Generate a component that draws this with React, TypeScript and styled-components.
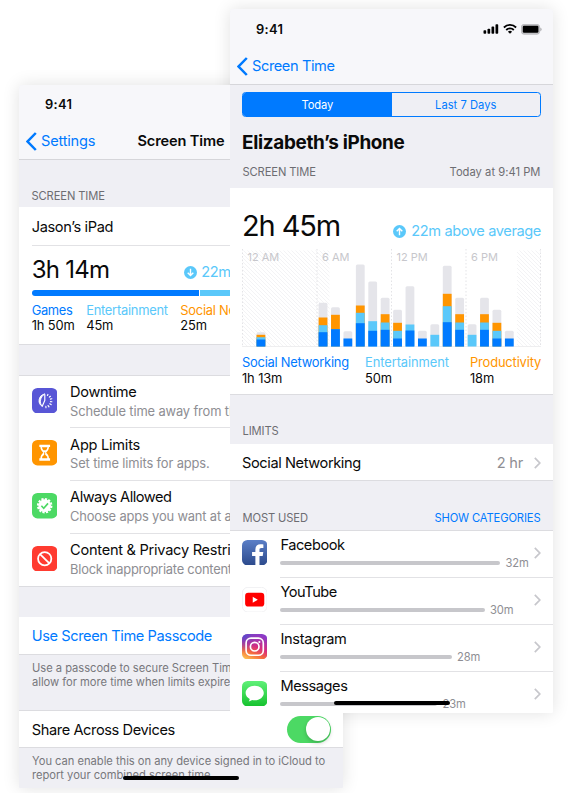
import React from "react";
import styled, { createGlobalStyle, css } from "styled-components";

const blue = "#007aff";
const sky = "#5ac8fa";
const orange = "#ff9500";
const gray = "#8e8e93";
const hairline = "#dcdce0";

const GlobalStyle = createGlobalStyle`
  * { box-sizing: border-box; }
  body { margin: 0; background: #fff; font-family: Inter, "Liberation Sans", sans-serif; color: #0a0a0a; -webkit-font-smoothing: antialiased; }
  svg { display: block; flex: none; }
`;

const Stage = styled.main`
  display: grid;
  width: 571px;
  height: 793px;
  overflow: hidden;
  align-items: start;
  justify-items: start;
`;

const Phone = styled.section<{ $front?: boolean }>`
  grid-area: 1 / 1;
  position: relative;
  display: flex;
  flex-direction: column;
  width: ${(p) => (p.$front ? 323 : 324)}px;
  height: ${(p) => (p.$front ? 704 : 703)}px;
  margin: ${(p) => (p.$front ? "9px 0 0 230px" : "85px 0 0 19px")};
  background: #efeff4;
  border-radius: 4px 4px 1px 1px;
  overflow: hidden;
  white-space: nowrap;
`;

/* Carries the soft shadow, which the clipped phone body cannot show. */
const PhoneShadow = styled.div<{ $front?: boolean }>`
  grid-area: 1 / 1;
  width: ${(p) => (p.$front ? 323 : 324)}px;
  height: ${(p) => (p.$front ? 704 : 703)}px;
  margin: ${(p) => (p.$front ? "9px 0 0 230px" : "85px 0 0 19px")};
  border-radius: 4px;
  box-shadow: 0 0 17px rgba(0, 0, 0, 0.12);
`;

const Header = styled.header<{ $height: number }>`
  height: ${(p) => p.$height}px;
  flex: none;
  background: #f7f7fa;
  border-bottom: 1px solid #d6d6da;
`;

const StatusBar = styled.div<{ $height: number }>`
  display: flex;
  align-items: center;
  justify-content: space-between;
  height: ${(p) => p.$height}px;
  padding: 0 11px 0 26px;
`;

const Clock = styled.span`
  font-size: 12.9px;
  font-weight: 600;
  letter-spacing: 0.35px;
`;

const StatusIcons = styled.div`
  display: flex;
  align-items: center;
  gap: 4px;
`;

const NavBar = styled.div`
  display: grid;
  grid-template-columns: 1fr auto 1fr;
  align-items: center;
  height: 34px;
  padding: 0 7px;
`;

const BackLink = styled.a<{ $track: number }>`
  display: flex;
  align-items: center;
  gap: 4px;
  color: ${blue};
  font-size: 14.6px;
  letter-spacing: ${(p) => p.$track}px;
`;

const NavTitle = styled.h1`
  margin: 0;
  font-size: 14.6px;
  font-weight: 600;
  letter-spacing: -0.13px;
`;

const Segmented = styled.div`
  display: flex;
  flex: none;
  height: 25px;
  margin: 7px 12px 0 12px;
  border: 1px solid ${blue};
  border-radius: 3.5px;
  overflow: hidden;
`;

const Segment = styled.button<{ $active?: boolean }>`
  flex: 1;
  padding: 0;
  border: 0;
  font: 400 11.2px Inter, sans-serif;
  letter-spacing: ${(p) => (p.$active ? -0.15 : 0.02)}px;
  color: ${(p) => (p.$active ? "#fff" : blue)};
  background: ${(p) => (p.$active ? blue : "transparent")};
`;

const DeviceTitle = styled.h2`
  flex: none;
  margin: 0;
  padding: 0 12px;
  height: 50px;
  font-size: 18.9px;
  line-height: 51px;
  font-weight: 700;
  letter-spacing: -0.32px;
`;

const SectionLabels = styled.div<{ $height: number; $below: number }>`
  display: flex;
  flex: none;
  align-items: flex-end;
  justify-content: space-between;
  height: ${(p) => p.$height}px;
  padding: 0 12.5px ${(p) => p.$below}px 12.5px;
  font-size: 11.2px;
  line-height: 14px;
  color: #6d6d72;
`;

const Label = styled.span<{ $track?: number }>`
  letter-spacing: ${(p) => p.$track ?? -0.12}px;
`;

const LinkLabel = styled(Label)`
  color: ${blue};
`;

const Card = styled.div<{ $height: number; $inset?: number }>`
  flex: none;
  height: ${(p) => p.$height}px;
  padding: 0 ${(p) => p.$inset ?? 12}px;
  background: #fff;
  border-bottom: 1px solid ${hairline};
`;

const UsageSummary = styled.div<{ $large?: boolean }>`
  display: flex;
  align-items: flex-start;
  justify-content: space-between;
  ${(p) =>
    p.$large
      ? css`height: 61px; padding-top: 22.5px;`
      : css`height: 44px; padding-top: 9px;`}
`;

const TotalTime = styled.strong<{ $large?: boolean }>`
  font-weight: 400;
  font-size: ${(p) => (p.$large ? 29 : 24)}px;
  line-height: 30px;
  letter-spacing: ${(p) => (p.$large ? -1.1 : -0.72)}px;
`;

const Trend = styled.span<{ $large?: boolean }>`
  display: flex;
  align-items: center;
  gap: ${(p) => (p.$large ? 5 : 4)}px;
  margin-top: ${(p) => (p.$large ? 12.5 : 9.5)}px;
  font-size: 14.6px;
  line-height: 16px;
  letter-spacing: -0.39px;
  color: ${sky};
`;

const Legend = styled.dl<{ $columns: string; $top: number }>`
  display: grid;
  grid-template-columns: ${(p) => p.$columns};
  margin: 0;
  padding-top: ${(p) => p.$top}px;
  font-size: 12.9px;
  line-height: 15.6px;
`;

const LegendName = styled.dt<{ $color: string; $track: number }>`
  color: ${(p) => p.$color};
  letter-spacing: ${(p) => p.$track}px;
`;

const LegendValue = styled.dd`
  margin: 0;
  letter-spacing: -0.12px;
`;

const DeviceRow = styled.div`
  height: 38.5px;
  margin-right: -13px;
  border-bottom: 1px solid #e2e2e5;
  font-size: 14.6px;
  line-height: 40.5px;
  letter-spacing: -0.36px;
`;

const UsageTrack = styled.div`
  display: flex;
  gap: 1.5px;
  height: 6px;
  border-radius: 3px;
  overflow: hidden;
`;

const UsagePart = styled.i<{ $width: number; $color: string }>`
  width: ${(p) => p.$width}px;
  background: ${(p) => p.$color};
`;

const SettingsRow = styled.div<{ $height: number; $link?: boolean; $top?: boolean; $inset?: number }>`
  display: flex;
  flex: none;
  align-items: center;
  height: ${(p) => p.$height}px;
  padding: 1px 12px 0 ${(p) => p.$inset ?? 12}px;
  background: #fff;
  border-bottom: 1px solid ${hairline};
  ${(p) => p.$top && css`border-top: 1px solid ${hairline};`}
  font-size: 14.6px;
  letter-spacing: -0.4px;
  color: ${(p) => (p.$link ? blue : "inherit")};
`;

const RowName = styled.span`
  flex: 1;
`;

const RowValue = styled.span`
  margin-right: 11px;
  color: ${gray};
  letter-spacing: -0.2px;
`;

const Footnote = styled.p<{ $height: number }>`
  flex: none;
  height: ${(p) => p.$height}px;
  margin: 0;
  padding: 7.5px 12.5px 0 13px;
  font-size: 11.2px;
  line-height: 13.7px;
  letter-spacing: -0.03px;
  color: #77777c;
`;

const Gap = styled.div<{ $height: number }>`
  flex: none;
  height: ${(p) => p.$height}px;
`;

const List = styled.ul<{ $inset: number }>`
  flex: none;
  margin: 0;
  padding: 0 0 0 ${(p) => p.$inset}px;
  list-style: none;
  background: #fff;
  border-top: 1px solid ${hairline};
  border-bottom: 1px solid ${hairline};
`;

const OptionItem = styled.li`
  display: flex;
  gap: 13px;
  height: 52.7px;
  padding-top: 12.3px;
`;

const OptionText = styled.div`
  flex: 1;
  height: 52.7px;
  margin-top: -12.3px;
  padding-top: 7.5px;
  ${OptionItem}:not(:last-child) & { border-bottom: 1px solid #e2e2e5; }
`;

const OptionName = styled.div<{ $track: number }>`
  font-size: 14.6px;
  line-height: 18.6px;
  letter-spacing: ${(p) => p.$track}px;
`;

const OptionNote = styled.div<{ $track: number }>`
  font-size: 12.9px;
  line-height: 19.6px;
  color: ${gray};
  letter-spacing: ${(p) => p.$track}px;
`;

const AppItem = styled.li`
  display: flex;
  gap: 13px;
  height: 46.85px;
  padding-top: 9px;
`;

const AppBody = styled.div`
  display: flex;
  flex: 1;
  height: 46.85px;
  margin-top: -9px;
  padding-right: 12px;
  border-bottom: 1px solid #e2e2e5;
`;

const AppUsage = styled.div`
  flex: 1;
  padding-top: 5.2px;
`;

const AppName = styled.div<{ $track: number }>`
  font-size: 14.6px;
  line-height: 18px;
  letter-spacing: ${(p) => p.$track}px;
`;

const AppMeter = styled.div`
  display: flex;
  align-items: center;
  gap: 5px;
  height: 18px;
  margin-right: -12px;
  font-size: 11.2px;
  letter-spacing: -0.05px;
  color: ${gray};
`;

const MeterBar = styled.i<{ $width: number }>`
  width: ${(p) => p.$width}px;
  height: 4.4px;
  border-radius: 3px;
  background: #c7c7cb;
`;

const ChevronSlot = styled.div`
  padding-top: 16px;
`;

const Toggle = styled.span`
  display: flex;
  justify-content: flex-end;
  width: 44px;
  height: 27px;
  margin-top: -1px;
  padding: 1.5px;
  border-radius: 14px;
  background: #4cd964;
`;

const Knob = styled.i`
  width: 24px;
  height: 24px;
  border-radius: 50%;
  background: #fff;
  box-shadow: 0 2px 4px rgba(0, 0, 0, 0.2);
`;

const HomeIndicator = styled.div`
  position: absolute;
  left: 104px;
  bottom: 8px;
  width: 116px;
  height: 4.5px;
  border-radius: 3px;
  background: #000;
`;

const BackChevron = () => (
  <svg width="11" height="19" viewBox="0 0 11 19" fill="none" stroke={blue} strokeWidth="2.5">
    <path d="M9.8 1 1.6 9.5l8.2 8.5" />
  </svg>
);

const Chevron = () => (
  <svg width="7" height="12" viewBox="0 0 7 12" fill="none" stroke="#c7c7cc" strokeWidth="1.7">
    <path d="m.8 .8 5 5.2-5 5.2" />
  </svg>
);

const TrendArrow = ({ down }: { down?: boolean }) => (
  <svg width="13" height="13" viewBox="0 0 13 13">
    <circle cx="6.5" cy="6.5" r="6.5" fill={sky} />
    <path
      d={down ? "M6.5 2.8v6.6M3.7 6.8l2.8 2.8 2.8-2.8" : "M6.5 10.2V3.6M3.7 6.2l2.8-2.8 2.8 2.8"}
      fill="none"
      stroke="#fff"
      strokeWidth="1.4"
    />
  </svg>
);

const Signal = () => (
  <svg width="16" height="10" viewBox="0 0 16 10">
    <rect x="0.5" y="6.2" width="2.7" height="3.6" rx=".8" />
    <rect x="4.5" y="4.7" width="2.7" height="5.1" rx=".8" />
    <rect x="8.5" y="2.6" width="2.7" height="7.2" rx=".8" />
    <rect x="12.5" y="0.2" width="2.7" height="9.6" rx=".8" />
  </svg>
);

const Wifi = () => (
  <svg width="14" height="10" viewBox="0 0 14 10" fill="none" stroke="#000" strokeWidth="1.8">
    <path d="M.9 3.5a8.6 8.6 0 0 1 12.2 0M3.2 6a5.3 5.3 0 0 1 7.6 0" />
    <path d="M7 9.8 4.9 7.7a3 3 0 0 1 4.2 0Z" fill="#000" stroke="none" />
  </svg>
);

const Battery = () => (
  <svg width="21" height="11" viewBox="0 0 21 11">
    <rect x=".4" y=".4" width="18.2" height="9.8" rx="2.6" fill="#c4c4c7" stroke="#b4b4b7" strokeWidth=".8" />
    <rect x="1.8" y="1.8" width="15.6" height="7" rx="1.2" />
    <path d="M19.4 3.6v3.6a2 2 0 0 0 0-3.6Z" fill="#a0a0a3" />
  </svg>
);

const DowntimeIcon = () => (
  <svg width="25.4" height="25.4" viewBox="0 0 26 26">
    <rect width="26" height="26" rx="5.6" fill="#5856d6" />
    <g fill="none" stroke="#fff" strokeLinecap="round">
      <path d="M12.8 6.200A6.900 6.900 0 0 0 10.600 18.900C7.200 15.400 8.200 9.400 12.800 6.200Z" fill="#fff" strokeWidth=".9" />
      <path d="M13.100 6.700v6.100l-2.500 5.600" strokeWidth="1.200" />
      <path d="m15.800 7.600.5-1M17.800 9.300l1.100-.8M18.800 11.400l1.500-.4M18.900 13.900l1.500.2M18.200 16.200l1.400.8M16.500 18l.9 1.300M14.200 18.800l.1 1.400" strokeWidth="1.200" />
    </g>
  </svg>
);

const LimitsIcon = () => (
  <svg width="25.4" height="25.4" viewBox="0 0 26 26">
    <rect width="26" height="26" rx="5.6" fill={orange} />
    <path d="M7.5 4.800h11v2.400h-1.100c0 2.700-1.500 4.400-3 5.800 1.500 1.400 3 3.100 3 5.800h1.100v2.400h-11v-2.400h1.100c0-2.700 1.500-4.400 3-5.800-1.500-1.400-3-3.100-3-5.800H7.500Z" fill="#fff" />
    <path d="M10.200 7.300h5.600c-.2 1.400-.7 2.400-1.500 3.300h-2.600c-.8-.9-1.300-1.900-1.500-3.300ZM12.500 12.500h1v2.700l2.100 2v1.400h-5.200v-1.400l2.100-2Z" fill={orange} />
  </svg>
);

const AllowedIcon = () => (
  <svg width="25.4" height="25.4" viewBox="0 0 26 26">
    <rect width="26" height="26" rx="5.6" fill="#4cd964" />
    <circle cx="13" cy="13" r="6.5" fill="#fff" />
    <circle cx="13" cy="13" r="6.9" fill="none" stroke="#fff" strokeWidth="2.1" strokeDasharray="2.25 1.36" />
    <path d="m9.6 13.1 2.4 2.5 4.4-5" fill="none" stroke="#4cd964" strokeWidth="1.7" />
  </svg>
);

const RestrictionsIcon = () => (
  <svg width="25.4" height="25.4" viewBox="0 0 26 26">
    <rect width="26" height="26" rx="5.6" fill="#ff3b30" />
    <g fill="none" stroke="#fff" strokeWidth="1.8">
      <circle cx="13" cy="13" r="6.8" />
      <path d="m8.2 8.2 9.6 9.6" />
    </g>
  </svg>
);

const FacebookIcon = () => (
  <svg width="25.4" height="25.4" viewBox="0 0 26 26">
    <defs>
      <linearGradient id="fb" x2="0" y2="1">
        <stop stopColor="#5b7fc7" />
        <stop offset="1" stopColor="#2c4a8c" />
      </linearGradient>
    </defs>
    <rect width="26" height="26" rx="5.6" fill="url(#fb)" />
    <path d="M13.700 26V16.300h-3.400v-3.900h3.400V9.700c0-3.500 2.100-5.300 5.200-5.300 1.500 0 2.500.1 3 .2v3.700h-2.100c-1.600 0-1.900.8-1.900 1.900v2.200h3.900l-.6 3.900h-3.300V26Z" fill="#fff" />
  </svg>
);

const YouTubeIcon = () => (
  <svg width="25.4" height="25.4" viewBox="0 0 26 26">
    <rect x=".4" y=".4" width="25.2" height="25.2" rx="5.6" fill="#fff" stroke="#ededf0" strokeWidth=".8" />
    <rect x="3.2" y="6" width="19.6" height="14" rx="3.2" fill="#f00" />
    <path d="m11 10 5.2 3-5.2 3Z" fill="#fff" />
  </svg>
);

const InstagramIcon = () => (
  <svg width="25.4" height="25.4" viewBox="0 0 26 26">
    <defs>
      <linearGradient id="ig" x1=".2" y1="1" x2=".65" y2="0">
        <stop stopColor="#fdbf50" />
        <stop offset=".28" stopColor="#f56a3c" />
        <stop offset=".55" stopColor="#d92d7c" />
        <stop offset="1" stopColor="#8a3ac8" />
      </linearGradient>
      <radialGradient id="igb" cx="0" cy="0" r=".75">
        <stop stopColor="#3f50d8" />
        <stop offset="1" stopColor="#7a3fd0" stopOpacity="0" />
      </radialGradient>
    </defs>
    <rect width="26" height="26" rx="5.6" fill="url(#ig)" />
    <rect width="26" height="26" rx="5.6" fill="url(#igb)" />
    <g fill="none" stroke="#fff" strokeWidth="1.7">
      <rect x="4.2" y="4.2" width="17.6" height="17.6" rx="5" />
      <circle cx="13" cy="13" r="4.4" />
    </g>
    <circle cx="17.8" cy="8.2" r="1.1" fill="#fff" />
  </svg>
);

const MessagesIcon = () => (
  <svg width="25.4" height="25.4" viewBox="0 0 26 26">
    <defs>
      <linearGradient id="msg" x2="0" y2="1">
        <stop stopColor="#5ff078" />
        <stop offset="1" stopColor="#16c22e" />
      </linearGradient>
    </defs>
    <rect width="26" height="26" rx="5.6" fill="url(#msg)" />
    <path d="M13 4.8c5.2 0 9.3 3.3 9.3 7.5s-4.1 7.5-9.3 7.5c-1 0-1.9-.1-2.800-.3-.8.7-2 1.200-3.400 1.300.7-.7 1.100-1.500 1.100-2.400-2.500-1.300-4.200-3.500-4.200-6.100 0-4.200 4.100-7.500 9.300-7.500Z" fill="#fff" />
  </svg>
);

/* Heights above the baseline, in pixels: hour, total, top of orange, top of sky, top of blue. */
const hours: [number, number, number, number, number][] = [
  [1, 14.3, 11.7, 9.3, 7],
  [6, 43.7, 29, 21.3, 14.3],
  [7, 39.3, 31.7, 17.3, 17.3],
  [8, 15.3, 0, 0, 8],
  [9, 82, 41, 33.7, 23.3],
  [10, 65, 0, 25.3, 15.7],
  [11, 48.7, 32.3, 24, 16.7],
  [12, 36.7, 23.7, 15.7, 8],
  [13, 60.3, 0, 22, 16],
  [14, 15.7, 0, 0, 8],
  [15, 22.3, 0, 11.7, 0],
  [16, 80.7, 52.7, 40.3, 24.3],
  [17, 48.7, 32.3, 24, 16.7],
  [18, 22.3, 0, 11.7, 0],
  [19, 48.7, 32.3, 24, 16.7],
  [20, 36.7, 23.7, 15.7, 8],
  [21, 15.7, 0, 0, 8],
];
const tints = ["#e5e5ea", orange, sky, blue];

const ChartLabel = styled.text`
  font: 400 11px Inter, sans-serif;
  fill: #c7c7cc;
`;

const HourChart = () => (
  <svg width="300" height="98" viewBox="0 0 300 98">
    <defs>
      <pattern id="hatch" width="4" height="4" patternUnits="userSpaceOnUse">
        <path d="M-1-1 5 5M-1 3 1 5M3-1 5 1" stroke="#f0f0f2" strokeWidth=".8" />
      </pattern>
    </defs>
    <rect x=".5" y="1.5" width="87" height="96" fill="url(#hatch)" />
    <rect x="275" y="1.5" width="24" height="96" fill="url(#hatch)" />
    {[0.5, 75, 149.5, 224, 298.5].map((x) => (
      <path key={x} d={`M${x} 0V97`} stroke="#dcdcdf" strokeWidth=".8" strokeDasharray="1.5 2" />
    ))}
    <path d="M0 97.5H299" stroke="#e8e8ea" strokeWidth=".7" />
    {["12 AM", "6 AM", "12 PM", "6 PM"].map((t, i) => (
      <ChartLabel key={t} x={5.5 + i * 74.5} y="11.5">
        {t}
      </ChartLabel>
    ))}
    {hours.map(([hour, ...tops]) =>
      tops.map((top, i) =>
        top > 0 ? (
          <rect
            key={`${hour}-${i}`}
            x={2.1 + hour * 12.42}
            y={97.5 - top}
            width="8.8"
            height={top}
            rx={i === 0 ? 1.5 : 0}
            fill={tints[i]}
          />
        ) : null
      )
    )}
  </svg>
);

const options = [
  { icon: <DowntimeIcon />, name: "Downtime", track: -0.36, note: "Schedule time away from the screen.", noteTrack: -0.14 },
  { icon: <LimitsIcon />, name: "App Limits", track: -0.26, note: "Set time limits for apps.", noteTrack: -0.13 },
  { icon: <AllowedIcon />, name: "Always Allowed", track: -0.5, note: "Choose apps you want at all times.", noteTrack: -0.16 },
  { icon: <RestrictionsIcon />, name: "Content & Privacy Restrictions", track: -0.27, note: "Block inappropriate content.", noteTrack: -0.24 },
];

const apps = [
  { icon: <FacebookIcon />, name: "Facebook", track: -0.44, width: 220, time: "32m" },
  { icon: <YouTubeIcon />, name: "YouTube", track: -0.5, width: 204.5, time: "30m" },
  { icon: <InstagramIcon />, name: "Instagram", track: -0.28, width: 171.5, time: "28m" },
  { icon: <MessagesIcon />, name: "Messages", track: -0.42, width: 157, time: "23m" },
];

const SettingsPhone = () => (
  <Phone>
    <Header $height={75}>
      <StatusBar $height={39}>
        <Clock>9:41</Clock>
      </StatusBar>
      <NavBar>
        <BackLink $track={-0.2}>
          <BackChevron />
          Settings
        </BackLink>
        <NavTitle>Screen Time</NavTitle>
      </NavBar>
    </Header>
    <SectionLabels $height={47} $below={4.5}>
      <Label>SCREEN TIME</Label>
    </SectionLabels>
    <Card $height={137.5} $inset={12.7}>
      <DeviceRow>Jason’s iPad</DeviceRow>
      <UsageSummary>
        <TotalTime>3h 14m</TotalTime>
        <Trend>
          <TrendArrow down />
          22m below average
        </Trend>
      </UsageSummary>
      <UsageTrack>
        <UsagePart $width={168} $color={blue} />
        <UsagePart $width={69} $color={sky} />
        <UsagePart $width={60} $color={orange} />
      </UsageTrack>
      <Legend $columns="54.5px 94px auto" $top={7.3}>
        <div>
          <LegendName $color={blue} $track={-0.35}>Games</LegendName>
          <LegendValue>1h 50m</LegendValue>
        </div>
        <div>
          <LegendName $color={sky} $track={-0.26}>Entertainment</LegendName>
          <LegendValue>45m</LegendValue>
        </div>
        <div>
          <LegendName $color={orange} $track={-0.22}>Social Networking</LegendName>
          <LegendValue>25m</LegendValue>
        </div>
      </Legend>
    </Card>
    <Gap $height={30} />
    <List $inset={12.7}>
      {options.map((o) => (
        <OptionItem key={o.name}>
          {o.icon}
          <OptionText>
            <OptionName $track={o.track}>{o.name}</OptionName>
            <OptionNote $track={o.noteTrack}>{o.note}</OptionNote>
          </OptionText>
        </OptionItem>
      ))}
    </List>
    <Gap $height={30} />
    <SettingsRow $height={37.5} $link $inset={12.8}>
      <RowName>Use Screen Time Passcode</RowName>
    </SettingsRow>
    <Footnote $height={55.5}>
      Use a passcode to secure Screen Time settings, and to
      <br />
      allow for more time when limits expire.
    </Footnote>
    <SettingsRow $height={37.5} $top $inset={12.8}>
      <RowName>Share Across Devices</RowName>
      <Toggle>
        <Knob />
      </Toggle>
    </SettingsRow>
    <Footnote $height={42}>
      You can enable this on any device signed in to iCloud to
      <br />
      report your combined screen time.
    </Footnote>
    <HomeIndicator />
  </Phone>
);

const DevicePhone = () => (
  <Phone $front>
    <Header $height={76}>
      <StatusBar $height={40}>
        <Clock>9:41</Clock>
        <StatusIcons>
          <Signal />
          <Wifi />
          <Battery />
        </StatusIcons>
      </StatusBar>
      <NavBar>
        <BackLink $track={-0.4}>
          <BackChevron />
          Screen Time
        </BackLink>
      </NavBar>
    </Header>
    <Segmented>
      <Segment $active>Today</Segment>
      <Segment>Last 7 Days</Segment>
    </Segmented>
    <DeviceTitle>Elizabeth’s iPhone</DeviceTitle>
    <SectionLabels $height={21} $below={9.5}>
      <Label>SCREEN TIME</Label>
      <Label $track={0.02}>Today at 9:41 PM</Label>
    </SectionLabels>
    <Card $height={207}>
      <UsageSummary $large>
        <TotalTime $large>2h 45m</TotalTime>
        <Trend $large>
          <TrendArrow />
          22m above average
        </Trend>
      </UsageSummary>
      <HourChart />
      <Legend $columns="123px 105px auto" $top={8}>
        <div>
          <LegendName $color={blue} $track={-0.24}>Social Networking</LegendName>
          <LegendValue>1h 13m</LegendValue>
        </div>
        <div>
          <LegendName $color={sky} $track={-0.08}>Entertainment</LegendName>
          <LegendValue>50m</LegendValue>
        </div>
        <div>
          <LegendName $color={orange} $track={-0.15}>Productivity</LegendName>
          <LegendValue>18m</LegendValue>
        </div>
      </Legend>
    </Card>
    <SectionLabels $height={49} $below={6}>
      <Label>LIMITS</Label>
    </SectionLabels>
    <SettingsRow $height={37}>
      <RowName>Social Networking</RowName>
      <RowValue>2 hr</RowValue>
      <Chevron />
    </SettingsRow>
    <SectionLabels $height={49} $below={5.5}>
      <Label>MOST USED</Label>
      <LinkLabel>SHOW CATEGORIES</LinkLabel>
    </SectionLabels>
    <List $inset={12}>
      {apps.map((a) => (
        <AppItem key={a.name}>
          {a.icon}
          <AppBody>
            <AppUsage>
              <AppName $track={a.track}>{a.name}</AppName>
              <AppMeter>
                <MeterBar $width={a.width} />
                {a.time}
              </AppMeter>
            </AppUsage>
            <ChevronSlot>
              <Chevron />
            </ChevronSlot>
          </AppBody>
        </AppItem>
      ))}
    </List>
    <HomeIndicator />
  </Phone>
);

export default function App() {
  return (
    <Stage>
      <GlobalStyle />
      <PhoneShadow />
      <SettingsPhone />
      <PhoneShadow $front />
      <DevicePhone />
    </Stage>
  );
}
